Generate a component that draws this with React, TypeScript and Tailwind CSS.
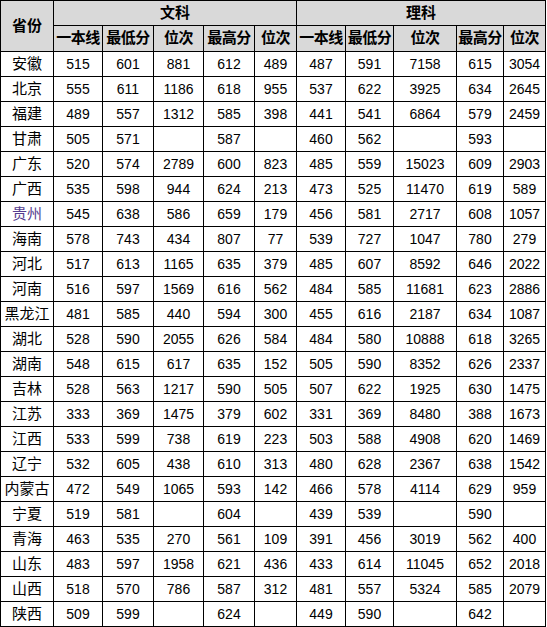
const rows: [string, ...string[]][] = [
  ['安徽', '515', '601', '881', '612', '489', '487', '591', '7158', '615', '3054'],
  ['北京', '555', '611', '1186', '618', '955', '537', '622', '3925', '634', '2645'],
  ['福建', '489', '557', '1312', '585', '398', '441', '541', '6864', '579', '2459'],
  ['甘肃', '505', '571', '', '587', '', '460', '562', '', '593', ''],
  ['广东', '520', '574', '2789', '600', '823', '485', '559', '15023', '609', '2903'],
  ['广西', '535', '598', '944', '624', '213', '473', '525', '11470', '619', '589'],
  ['贵州', '545', '638', '586', '659', '179', '456', '581', '2717', '608', '1057'],
  ['海南', '578', '743', '434', '807', '77', '539', '727', '1047', '780', '279'],
  ['河北', '517', '613', '1165', '635', '379', '485', '607', '8592', '646', '2022'],
  ['河南', '516', '597', '1569', '616', '562', '484', '585', '11681', '623', '2886'],
  ['黑龙江', '481', '585', '440', '594', '300', '455', '616', '2187', '634', '1087'],
  ['湖北', '528', '590', '2055', '626', '584', '484', '580', '10888', '618', '3265'],
  ['湖南', '548', '615', '617', '635', '152', '505', '590', '8352', '626', '2337'],
  ['吉林', '528', '563', '1217', '590', '505', '507', '622', '1925', '630', '1475'],
  ['江苏', '333', '369', '1475', '379', '602', '331', '369', '8480', '388', '1673'],
  ['江西', '533', '599', '738', '619', '223', '503', '588', '4908', '620', '1469'],
  ['辽宁', '532', '605', '438', '610', '313', '480', '628', '2367', '638', '1542'],
  ['内蒙古', '472', '549', '1065', '593', '142', '466', '578', '4114', '629', '959'],
  ['宁夏', '519', '581', '', '604', '', '439', '539', '', '590', ''],
  ['青海', '463', '535', '270', '561', '109', '391', '456', '3019', '562', '400'],
  ['山东', '483', '597', '1958', '621', '436', '433', '614', '11045', '652', '2018'],
  ['山西', '518', '570', '786', '587', '312', '481', '557', '5324', '585', '2079'],
  ['陕西', '509', '599', '', '624', '', '449', '590', '', '642', ''],
];

// column widths, measured off the screenshot
const widths = [53, 49, 51, 50, 51, 42, 49, 48, 63, 47, 42];
const subHeads = ['一本线', '最低分', '位次', '最高分', '位次'];

const cell = 'border border-black p-0 text-center align-middle whitespace-nowrap';
const head = `${cell} bg-[#d9d9d9] font-bold text-[15px]`;

export default function App() {
  return (
    <div
      className="w-[547px] h-[627px] bg-white text-black"
      style={{ fontFamily: '"Liberation Sans", "Noto Sans CJK SC", sans-serif' }}
    >
      <table className="table-fixed border-collapse">
        <colgroup>
          {widths.map((w, i) => (
            <col key={i} style={{ width: w }} />
          ))}
        </colgroup>
        <thead>
          <tr className="h-[25px]">
            <th rowSpan={2} className={head}>省份</th>
            <th colSpan={5} className={head}>文科</th>
            <th colSpan={5} className={head}>理科</th>
          </tr>
          <tr className="h-[26px]">
            {[...subHeads, ...subHeads].map((h, i) => (
              <th key={i} className={`${head} tracking-[-0.5px]`}>{h}</th>
            ))}
          </tr>
        </thead>
        <tbody>
          {rows.map(([name, ...vals]) => (
            <tr key={name} className="h-[25px]">
              <td className={`${cell} text-[15px] ${name === '贵州' ? 'text-[#553c8f]' : ''}`}>{name}</td>
              {vals.map((v, i) => (
                <td key={i} className={`${cell} text-[14px]`}>{v}</td>
              ))}
            </tr>
          ))}
        </tbody>
      </table>
    </div>
  );
}
